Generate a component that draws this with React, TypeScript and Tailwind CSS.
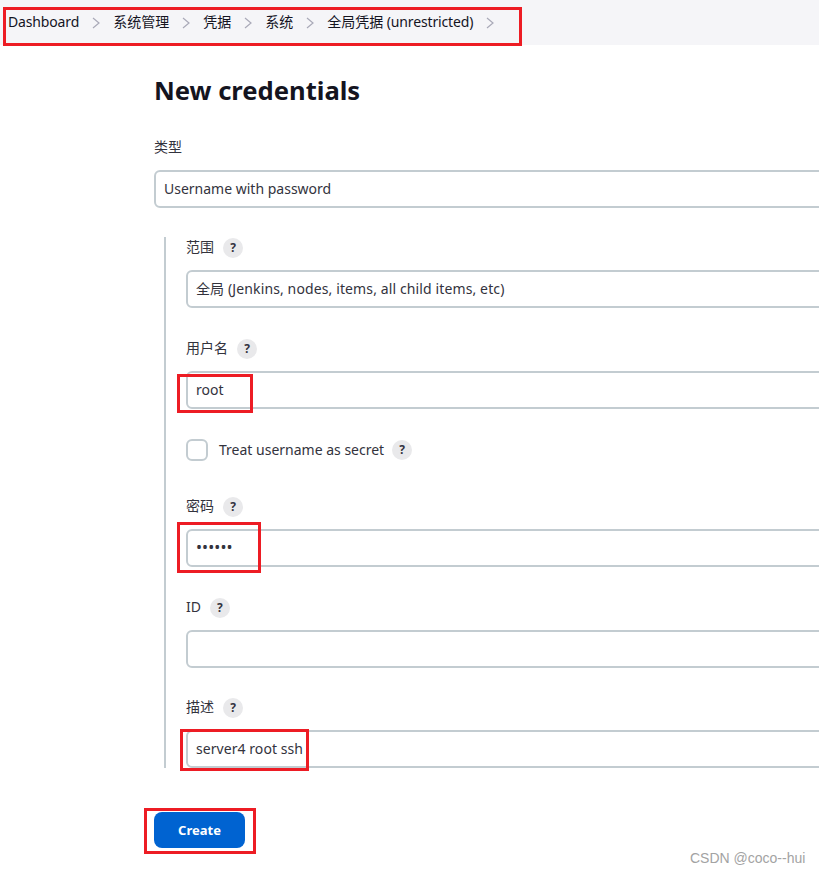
import React from "react";

const FONT = "font-['Noto_Sans','Noto_Sans_CJK_SC',sans-serif]";

function Chevron() {
  return (
    <svg width="8" height="12" viewBox="0 0 8 12" fill="none" className="shrink-0 mx-[13px] mt-[1px]">
      <path d="M1 1l6 5-6 5" stroke="#a9a9b8" strokeWidth="1.2" />
    </svg>
  );
}

function Help() {
  return (
    <span className="w-5 h-5 rounded-full bg-[#e9e9eb] flex items-center justify-center text-[12px] font-bold text-[#333340] shrink-0">
      ?
    </span>
  );
}

function Label({ text }: { text: string }) {
  return (
    <div className="flex items-center gap-[9px] h-5 text-[14px] leading-5 text-[#33333d]">
      <span className="-mt-[2px]">{text}</span>
      <Help />
    </div>
  );
}

function Field({ value, type = "text", className = "" }: { value: string; type?: string; className?: string }) {
  return (
    <input
      readOnly
      type={type}
      value={value}
      className={`block w-full h-[38px] rounded-md border-2 border-[#c3ccd1] bg-white px-2 pb-[2px] text-[14px] text-[#33333d] outline-none ${FONT} ${className}`}
    />
  );
}

function RedBox({ className }: { className: string }) {
  return <div className={`absolute border-[3px] border-[#ed1c24] pointer-events-none ${className}`} />;
}

export default function App() {
  return (
    <div className={`relative w-[819px] h-[873px] overflow-hidden bg-white ${FONT}`}>
      <nav className="h-[45px] bg-[#f5f5f8] flex items-start pl-2 pt-[12px] text-[14px] leading-5 text-[#14141f]">
        <span className="whitespace-nowrap tracking-[-0.15px]">Dashboard</span>
        <span className="h-5 flex items-center"><Chevron /></span>
        <span className="whitespace-nowrap">系统管理</span>
        <span className="h-5 flex items-center"><Chevron /></span>
        <span className="whitespace-nowrap">凭据</span>
        <span className="h-5 flex items-center"><Chevron /></span>
        <span className="whitespace-nowrap">系统</span>
        <span className="h-5 flex items-center"><Chevron /></span>
        <span className="whitespace-nowrap">全局凭据 <span className="tracking-[-0.15px]">(unrestricted)</span></span>
        <span className="h-5 flex items-center"><Chevron /></span>
      </nav>

      <main className="ml-[154px] w-[900px]">
        <h1 className="mt-[25px] h-[42px] text-[25.6px] leading-[42px] font-bold text-[#14141f]">New credentials</h1>

        <div className="mt-[25px] h-5 text-[14px] leading-5 text-[#33333d]">类型</div>
        <Field value="Username with password" className="mt-[13px]" />

        <section className="mt-[29px] ml-[10px] border-l-2 border-[#c3ccd1] pl-5 pt-px">
          <Label text="范围" />
          <Field value="全局 (Jenkins, nodes, items, all child items, etc)" className="mt-3 tracking-[0.12px]" />

          <div className="mt-[31px]"><Label text="用户名" /></div>
          <Field value="root" className="mt-3" />

          <div className="mt-[30px] flex items-center h-[22px] text-[14px] text-[#33333d]">
            <span className="w-[22px] h-[22px] rounded-md border-2 border-[#c3ccd1] bg-white shrink-0" />
            <span className="ml-[11px] -mt-[2px]">Treat username as secret</span>
            <span className="ml-[8px]"><Help /></span>
          </div>

          <div className="mt-[36px]"><Label text="密码" /></div>
          <Field value="123456" type="password" className="mt-3 text-[16px] tracking-[0.1px] text-[#14141f]" />

          <div className="mt-[30px] pt-px h-5"><Label text="ID" /></div>
          <Field value="" className="mt-[13px]" />

          <div className="mt-[30px]"><Label text="描述" /></div>
          <Field value="server4 root ssh" className="mt-3 tracking-[0.06px]" />
        </section>

        <button className="mt-[44px] block w-[91px] h-9 rounded-lg bg-[#0063d1] text-white text-[13px] font-bold pt-px">
          Create
        </button>
      </main>

      <RedBox className="left-[3px] top-[7px] w-[519px] h-[39px]" />
      <RedBox className="left-[177px] top-[374px] w-[76px] h-[39px]" />
      <RedBox className="left-[177px] top-[522px] w-[84px] h-[51px]" />
      <RedBox className="left-[180px] top-[729px] w-[129px] h-[42px]" />
      <RedBox className="left-[144px] top-[808px] w-[112px] h-[46px]" />

      <div className="absolute left-[690px] top-[850px] text-[14px] leading-4 text-[#a3a3a3] font-['Liberation_Sans',sans-serif] whitespace-nowrap">
        CSDN @coco--hui
      </div>
    </div>
  );
}
